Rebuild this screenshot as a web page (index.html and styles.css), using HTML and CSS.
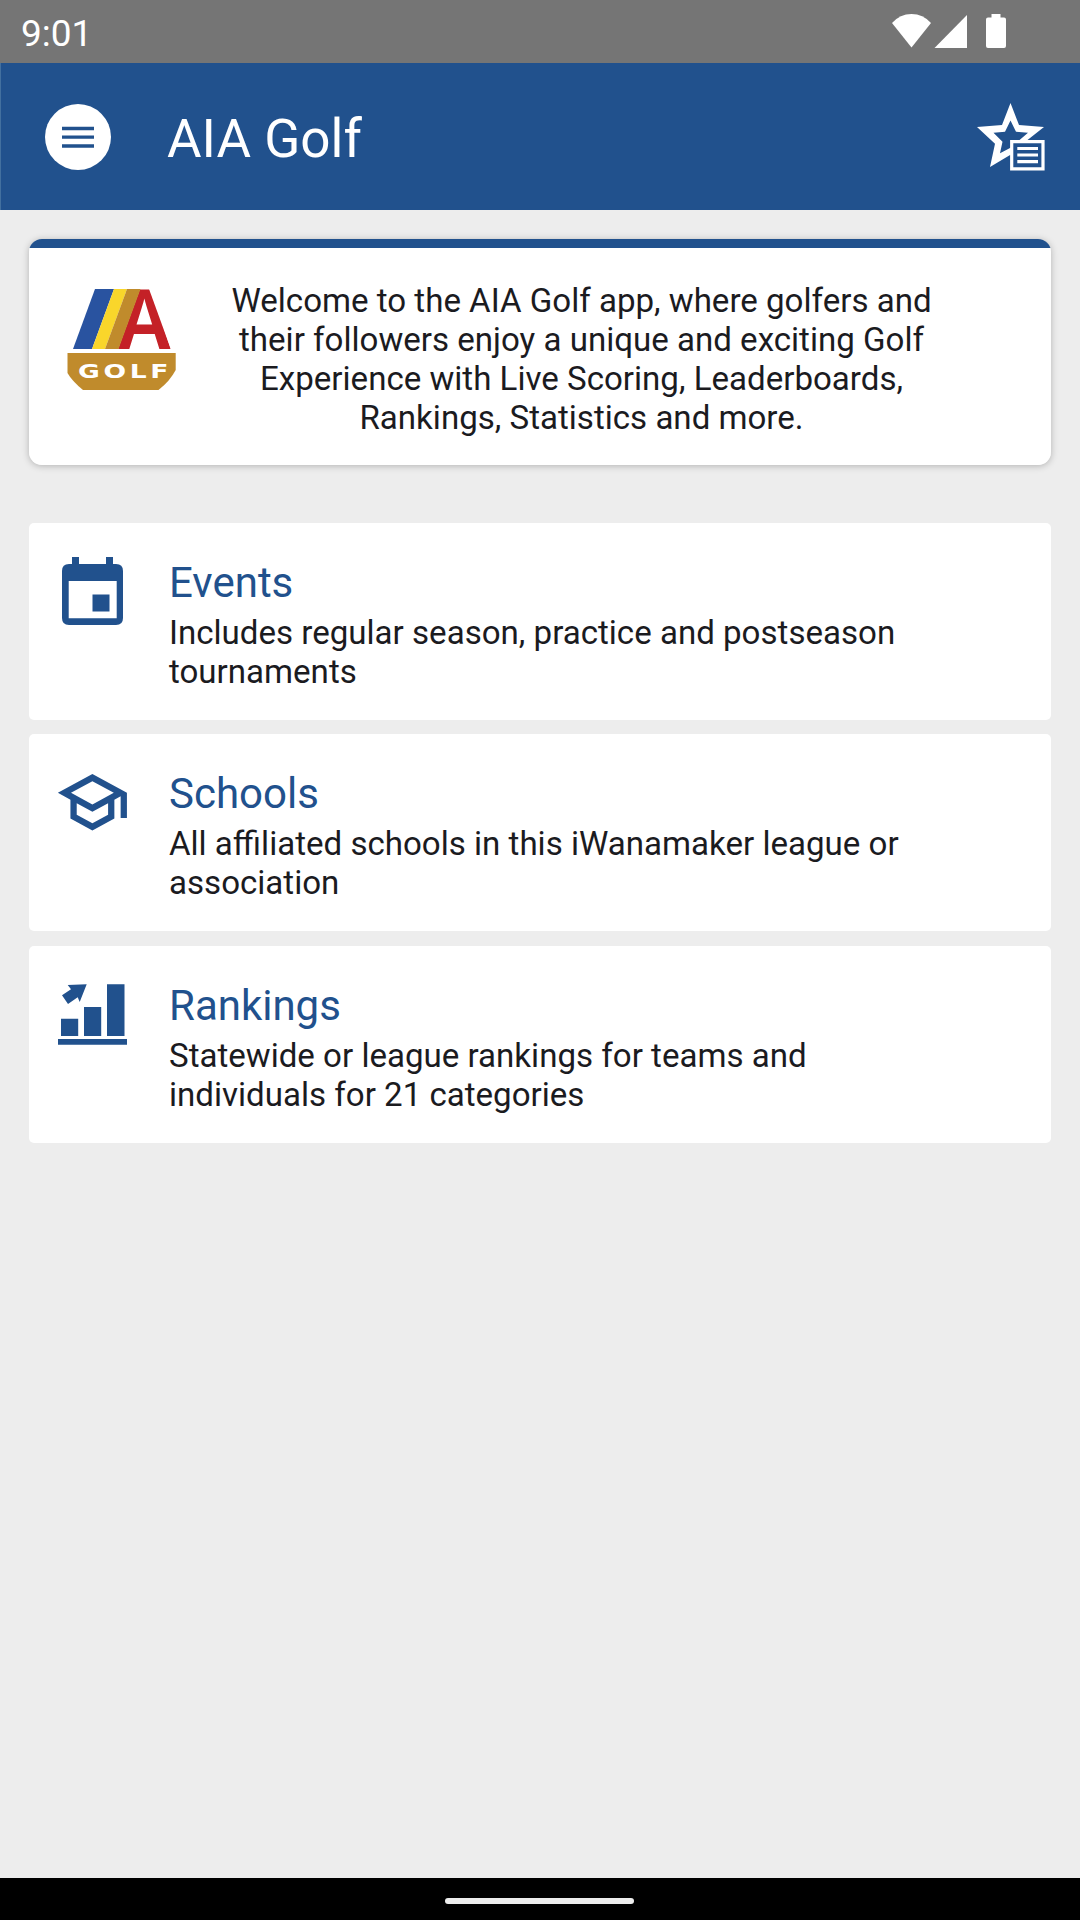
FILE: index.html
```html
<!DOCTYPE html>
<html lang="en">

<head>
    <meta charset="UTF-8">
    <meta name="viewport" content="width=device-width, initial-scale=1.0">
    <title>AIA Golf</title>
    <link rel="stylesheet" href="styles.css">
</head>

<body>
    <div class="status-bar">
        <span class="clock">9:01</span>
        <svg class="status-icons" width="116" height="36" viewBox="0 0 116 36" fill="#fff">
            <path d="M0 10Q8 1 19.500 1T39 10L19.500 34.500z" />
            <path d="M42.500 35H75V2z" />
            <path d="M99.500 1h9v3.500h3.500a2 2 0 0 1 2 2V33a2 2 0 0 1-2 2H96a2 2 0 0 1-2-2V6.500a2 2 0 0 1 2-2h3.500z" />
        </svg>
    </div>

    <header class="app-bar">
        <button class="menu-button" aria-label="Menu">
            <svg width="66" height="66" viewBox="0 0 66 66">
                <path d="M17 24.500h32M17 33.200h32M17 42h32" stroke="#21518d" stroke-width="3.300" />
            </svg>
        </button>
        <h1>AIA Golf</h1>
        <button class="favorites-button" aria-label="Favorites">
            <svg width="68" height="68" viewBox="0 0 68 68">
                <path fill="#fff" fill-rule="evenodd"
                    d="M33.500 0L42 22l25 2-16.500 13v17L33.500 51.700 13 64l5-23.200L0 24l25-2zM33.500 17.500L28 28.700l-11.500 1L25.500 38.700 23 50.300l10.500-5.600L42 37.500l9-7.800-12-1z" />
                <path d="M34.700 38.700h31.300v27.100H34.700z" fill="#21518d" stroke="#fff" stroke-width="3.200" />
                <path d="M40.300 45.500h20.700M40.300 52h20.700M40.300 58.600h20.700" stroke="#fff" stroke-width="3.100" />
            </svg>
        </button>
    </header>

    <main>
        <section class="welcome">
            <svg class="logo" width="109" height="102" viewBox="0 0 109 102">
                <clipPath id="aShape">
                    <path d="M73 0h9L103.800 60H51z" />
                </clipPath>
                <g clip-path="url(#aShape)">
                    <text class="logo-a" transform="translate(48.700 60) scale(.910 1)">A</text>
                </g>
                <path fill="#2953a0" d="M28 0h19L25 60H6z" />
                <path fill="#f9d62b" d="M47 0h13L38 60H25z" />
                <path fill="#c08b2c" d="M60 0h13.500l-22 60H38z" />
                <path fill="#c08b2c" d="M.500 64h108.200v17Q103 92 91.500 101H16Q5 92 .500 84z" />
                <text class="logo-golf" transform="translate(11 88.700) scale(1.400 1)">GOLF</text>
            </svg>
            <p>Welcome to the AIA Golf app, where golfers and their followers enjoy a unique and exciting Golf
                Experience with Live Scoring, Leaderboards, Rankings, Statistics and more.</p>
        </section>

        <nav class="menu">
            <a class="menu-item">
                <svg width="75" height="75" viewBox="0 0 75 75">
                    <path fill-rule="evenodd"
                        d="M16 4h7v7h27V4h7v7h3q7 0 7 7v47q0 7-7 7H13q-7 0-7-7V18q0-7 7-7h3zM12.700 28v37.300h48V28zM36.500 41.500h17v17h-17z" />
                </svg>
                <div class="item-text">
                    <h2>Events</h2>
                    <p>Includes regular season, practice and postseason tournaments</p>
                </div>
            </a>
            <a class="menu-item">
                <svg width="75" height="75" viewBox="0.400 -.200 23.900 23.900">
                    <path fill-rule="evenodd"
                        d="M12 3L1 9l4 2.180v6L12 21l7-3.820v-6l2-1.090V17h2V9L12 3zm6.820 6L12 12.720 5.180 9 12 5.280 18.820 9zM17 15.990l-5 2.730-5-2.730v-3.720L12 15l5-2.730v3.720z" />
                </svg>
                <div class="item-text">
                    <h2>Schools</h2>
                    <p>All affiliated schools in this iWanamaker league or association</p>
                </div>
            </a>
            <a class="menu-item">
                <svg width="75" height="75" viewBox="0 0 75 75">
                    <path d="M5 42.700h17.200V60H5zM28 31h17.200v29H28zM51 8.300h17.500V60H51zM2 63h69v5.800H2z" />
                    <path d="M30.700 8.300L23.700 26l-2-4.700L12 28 6 19.300l9-6L11.700 9z" />
                </svg>
                <div class="item-text">
                    <h2>Rankings</h2>
                    <p>Statewide or league rankings for teams and individuals for 21 categories</p>
                </div>
            </a>
        </nav>
    </main>

    <div class="nav-bar">
        <div class="nav-handle"></div>
    </div>
</body>

</html>
```
FILE: styles.css
```css
* {
    margin: 0;
    padding: 0;
    box-sizing: border-box;
}

body {
    height: 1920px;
    display: flex;
    flex-direction: column;
    font-family: Roboto, sans-serif;
    background-color: #ededed;
    color: #1b1b1f;
    overflow: hidden;
}

svg {
    display: block;
    flex-shrink: 0;
}

h1,
h2 {
    font-weight: 400;
}

.status-bar {
    height: 63px;
    display: flex;
    justify-content: space-between;
    padding: 13px 72px 0 21px;
    background: #757575;
}

.clock {
    font-size: 37px;
    line-height: 41px;
    color: white;
}

.app-bar {
    height: 147px;
    display: flex;
    align-items: center;
    padding: 0 35px 0 44px;
    background: #21518d;
    border-left: 1px solid #43709f;
    color: white;
}

button {
    border: none;
    background: none;
}

.menu-button {
    width: 66px;
    height: 66px;
    border-radius: 50%;
    background: white;
}

h1 {
    flex: 1;
    margin-left: 56px;
    font-size: 53px;
    line-height: 62px;
    padding-top: 5px;
}

main {
    flex: 1;
    padding: 29px;
}

.welcome {
    height: 226px;
    display: flex;
    padding: 42px 109px 0 38px;
    background: linear-gradient(#21518d 8.500px, white 8.500px);
    border-radius: 13px;
    box-shadow: 0 1px 7px rgba(0, 0, 0, 0.25);
}

.logo {
    margin: 8px 45px 0 0;
}

.logo-a {
    font: bold 87px "Liberation Sans", sans-serif;
    fill: #c42127;
}

.logo-golf {
    font: bold 19px "DejaVu Sans", sans-serif;
    letter-spacing: 2.600px;
    fill: white;
}

p {
    font-size: 33.080px;
    line-height: 39px;
}

.welcome p {
    flex: 1;
    text-align: center;
}

.menu {
    display: flex;
    flex-direction: column;
    gap: 14.400px;
    margin-top: 58px;
}

.menu-item {
    height: 197px;
    display: flex;
    gap: 38px;
    padding: 30px 120px 0 27px;
    background: white;
    border-radius: 5px;
}

.menu-item svg {
    fill: #21518d;
}

h2 {
    font-size: 42px;
    line-height: 50px;
    margin: 5px 0;
    color: #21518d;
}

.nav-bar {
    height: 42px;
    display: flex;
    justify-content: center;
    padding: 20px 2px 0 0;
    background: black;
}

.nav-handle {
    width: 189px;
    height: 6px;
    border-radius: 3px;
    background: #ededed;
}
```
